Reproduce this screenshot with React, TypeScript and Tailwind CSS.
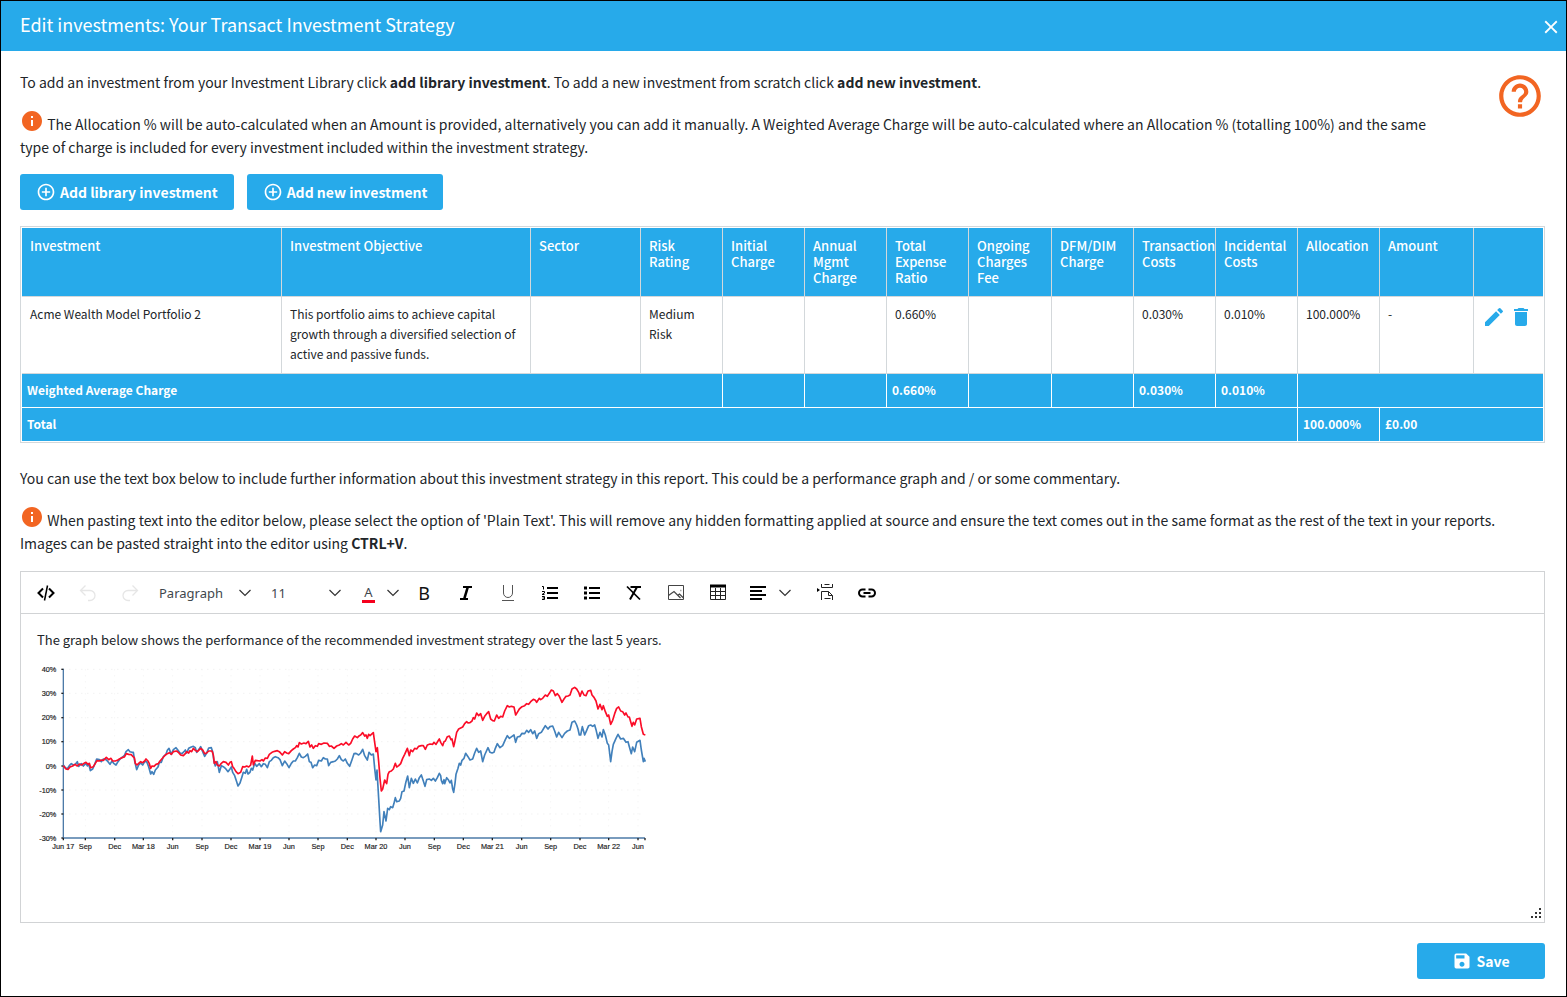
import React, { useState } from 'react';
import { MdAddCircleOutline, MdClose, MdDelete, MdEdit, MdHelpOutline, MdInfo, MdSave } from 'react-icons/md';

type Investment = {
    name: string;
    objective: string;
    sector: string;
    risk: string;
    charges: string[];
    allocation: string;
    amount: string;
};

type Segment = {
    start: number;
    points: string;
};

const columns = [
    { label: 'Investment', width: 'w-[260px]' },
    { label: 'Investment Objective', width: 'w-[249px]' },
    { label: 'Sector', width: 'w-[110px]' },
    { label: 'Risk Rating', width: 'w-[82px]' },
    { label: 'Initial Charge', width: 'w-[82px]' },
    { label: 'Annual Mgmt Charge', width: 'w-[82px]' },
    { label: 'Total Expense Ratio', width: 'w-[82px]' },
    { label: 'Ongoing Charges Fee', width: 'w-[83px]' },
    { label: 'DFM/DIM Charge', width: 'w-[82px]' },
    { label: 'Transaction Costs', width: 'w-[82px]' },
    { label: 'Incidental Costs', width: 'w-[82px]' },
    { label: 'Allocation', width: 'w-[82px]' },
    { label: 'Amount', width: 'w-[94px]' },
    { label: '', width: 'w-[69px]' },
];

const investments: Investment[] = [
    {
        name: 'Acme Wealth Model Portfolio 2',
        objective: 'This portfolio aims to achieve capital growth through a diversified selection of active and passive funds.',
        sector: '',
        risk: 'Medium Risk',
        charges: ['', '', '0.660%', '', '', '0.030%', '0.010%'],
        allocation: '100.000%',
        amount: '-',
    },
];

const averageCharges = ['', '', '0.660%', '', '', '0.030%', '0.010%'];

const yLabels = [
    { y: 43, label: '40%' },
    { y: 115, label: '30%' },
    { y: 188, label: '20%' },
    { y: 260, label: '10%' },
    { y: 333, label: '0%' },
    { y: 405, label: '-10%' },
    { y: 477, label: '-20%' },
    { y: 549, label: '-30%' },
];

const xLabels = [
    { x: 100, label: 'Jun 17' },
    { x: 166, label: 'Sep' },
    { x: 254, label: 'Dec' },
    { x: 340, label: 'Mar 18' },
    { x: 428, label: 'Jun' },
    { x: 516, label: 'Sep' },
    { x: 603, label: 'Dec' },
    { x: 690, label: 'Mar 19' },
    { x: 777, label: 'Jun' },
    { x: 864, label: 'Sep' },
    { x: 952, label: 'Dec' },
    { x: 1038, label: 'Mar 20' },
    { x: 1125, label: 'Jun' },
    { x: 1213, label: 'Sep' },
    { x: 1300, label: 'Dec' },
    { x: 1387, label: 'Mar 21' },
    { x: 1475, label: 'Jun' },
    { x: 1562, label: 'Sep' },
    { x: 1650, label: 'Dec' },
    { x: 1736, label: 'Mar 22' },
    { x: 1824, label: 'Jun' },
];

const portfolioSeries: Segment[] = [
    {
        start: 0,
        points: '100,332 108,342 114,343 120,336 128,333 135,328 142,333 148,327 155,330 162,325 168,322 174,328 178,325 182,338 190,335 196,325 201,317 208,318 214,315 220,316 229,307 236,314 243,310 248,318 256,318 262,316 268,312 276,308 283,306 289,296 296,298 304,299 308,304 313,308 316,325 321,330 326,325 332,320 338,323 344,318 348,312 354,318 358,326 362,340 366,333 372,334 378,328 385,326 390,318 398,309 406,300 412,296 418,293 424,298 430,290 440,288 446,293 452,300 460,302 466,296 470,290 476,294 480,287 485,290 490,280 496,286 502,290 508,284 512,280 518,285 524,296 530,294 536,288 546,288 550,300 553,325 558,320 562,330 568,333 574,325 580,320 588,322 595,330 600,322 604,320 608,335 612,340 618,350 624,356',
    },
    {
        start: 630,
        points: '2,352 8,335 14,336 20,333 26,336 32,330 37,303 40,330 46,316 60,318 66,314 70,318 76,309 82,310 88,298 96,292 104,289 112,287 118,290 127,300 134,290 140,294 146,296 154,287 160,282 166,278 170,272 174,276 178,263 184,267 192,264 198,266 205,259 210,276 215,270 220,280 226,272 232,274 236,266 244,268 252,264 262,265 268,274 274,273 282,280 290,273 298,270 304,266 310,270 318,262 326,270 332,265 338,252 344,243 352,248 358,242 362,240 368,233 374,243 378,240 382,250 386,238 390,242 400,233 404,262 408,290 412,278 416,320 420,370 424,408 428,402 434,375 440,386 444,358 448,350 454,348 460,342 466,325 470,336 476,332 482,326 488,310 494,298 502,280 508,302 512,285 518,290 524,280 530,282 536,274 544,272 550,272 556,283 562,270 570,267 578,268 582,262 588,268 594,258 598,252',
    },
    {
        start: 1230,
        points: '2,262 8,272 12,260 16,258 22,245 28,243 33,254 36,252 41,275 44,262 50,232 56,222 62,219 68,216 74,206 80,200 84,204 90,203 96,198 100,188 104,192 110,174 116,182 122,176 128,196 134,184 140,176 146,170 152,192 158,197 163,198 170,180 176,190 182,184 188,186 194,168 202,152 208,156 214,154 222,156 227,180 232,172 238,162 246,155 254,152 260,146 266,148 272,140 280,133 286,136 290,142 298,130 302,134 308,130 316,120 322,124 328,115 334,105 340,108 346,122 352,116 358,124 366,142 372,132 378,124 384,123 390,120 396,102 404,97 410,102 416,112 420,124 426,108 432,120 438,122 444,108 452,106 456,120 462,127 468,138 474,162 480,148 486,164 490,152 496,170 502,184 506,180 512,208 518,196 524,176 530,160 536,156 542,168 548,170 554,180 558,174 564,186 568,186 572,200 576,214 580,202 584,210 590,192 600,190 604,215 610,238 616,240',
    },
];

const benchmarkSeries: Segment[] = [
    {
        start: 0,
        points: '100,330 106,338 112,341 118,332 124,326 130,330 136,328 142,320 146,334 154,326 160,333 168,325 172,333 176,326 181,347 188,342 194,328 200,312 208,314 214,320 220,312 228,314 234,320 240,328 246,318 252,326 258,330 264,320 270,312 278,306 284,300 288,290 295,284 300,290 306,292 310,292 314,318 320,344 326,330 332,324 338,330 344,320 350,320 356,335 362,357 366,350 371,358 376,345 384,336 388,322 394,322 400,305 408,298 412,286 417,280 424,298 430,284 438,278 444,286 450,294 456,296 462,290 466,285 470,294 476,280 484,276 490,274 496,278 500,292 506,284 512,275 518,290 524,304 530,294 536,279 544,278 548,290 552,320 556,333 562,320 568,352 574,332 580,335 586,340 594,350 600,342 604,336 608,352 614,362 620,380 624,393',
    },
    {
        start: 630,
        points: '0,384 6,365 10,352 16,355 20,343 24,357 30,352 34,340 38,345 44,325 50,334 58,326 64,335 70,326 76,328 82,338 88,320 94,316 100,308 106,305 114,308 120,314 127,332 134,318 140,326 147,338 154,325 160,318 166,318 172,308 178,295 184,306 190,308 196,304 203,297 208,320 213,322 218,338 224,330 230,332 236,316 244,318 250,308 256,312 262,312 266,332 272,322 280,320 286,318 292,312 298,302 304,314 310,318 316,312 322,325 329,334 336,314 342,296 348,295 356,300 362,294 368,283 374,302 382,315 387,292 394,300 400,297 404,340 408,375 411,345 416,430 420,500 422,530 428,510 432,470 438,498 443,460 448,464 452,455 458,458 462,445 466,428 470,440 478,438 482,430 486,410 492,408 498,380 503,363 508,398 514,370 520,385 526,372 532,384 538,368 544,360 550,378 555,394 560,374 568,372 574,376 580,370 586,378 592,368 598,355',
    },
    {
        start: 1230,
        points: '2,362 4,376 8,386 12,374 14,386 20,368 26,376 30,384 34,376 38,402 41,412 45,385 48,358 54,340 58,325 62,330 66,316 72,310 77,295 84,305 90,315 98,312 104,294 110,280 116,292 122,288 128,320 134,300 144,278 150,292 156,294 162,292 166,280 172,266 180,278 188,272 196,254 202,242 208,250 216,244 222,240 227,262 232,246 240,244 246,235 254,236 260,226 266,232 272,224 278,236 284,228 290,250 296,236 304,232 310,222 316,212 324,222 330,215 338,213 344,228 350,246 356,232 366,248 374,235 382,228 390,225 396,202 404,198 410,210 414,222 418,240 422,240 427,215 434,240 440,226 446,212 452,210 458,214 464,210 468,224 474,250 480,232 486,246 490,224 496,240 502,265 506,270 512,320 516,290 520,268 528,250 534,238 542,252 550,250 558,262 564,260 568,275 574,296 578,276 584,290 590,262 600,256 604,285 610,320 612,310 616,320',
    },
];

const joinSegments = (segments: Segment[]) =>
    segments
        .flatMap(({ start, points }) =>
            points.split(' ').map((point) => {
                const [x, y] = point.split(',').map(Number);
                return `${x + start},${y}`;
            })
        )
        .join(' ');

const PerformanceChart = () => (
    <svg
        viewBox="0 0 1860 615"
        className="mt-1 block w-[620px] max-w-full"
        fontFamily="'Liberation Sans', Arial, sans-serif"
        fontSize="22"
        role="img"
        aria-label="Performance graph"
    >
        {yLabels.slice(0, 7).map(({ y }) => (
            <path key={y} d={`M100 ${y}H1845`} stroke="#ececec" strokeWidth="3" strokeDasharray="3 15" />
        ))}
        {xLabels.slice(1).map(({ x }) => (
            <path key={x} d={`M${x} 43V549`} stroke="#f1f1f1" strokeWidth="3" strokeDasharray="3 15" />
        ))}
        <path d="M100 41V549H1845" fill="none" stroke="#4d7ba8" strokeWidth="4" />
        {yLabels.map(({ y, label }) => (
            <g key={label}>
                <path d={`M94 ${y}h6`} stroke="#222" strokeWidth="4" />
                <text x="79" y={y + 8} textAnchor="end" fill="#222" stroke="#222" strokeWidth="0.5">{label}</text>
            </g>
        ))}
        {xLabels.map(({ x, label }) => (
            <g key={x}>
                <path d={`M${x} 549v7`} stroke="#222" strokeWidth="4" />
                <text x={x} y="583" textAnchor="middle" fill="#222" stroke="#222" strokeWidth="0.5">{label}</text>
            </g>
        ))}
        <path d="M1845 549v7" stroke="#222" strokeWidth="4" />
        <polyline points={joinSegments(benchmarkSeries)} fill="none" stroke="#4180bb" strokeWidth="5" strokeLinejoin="round" />
        <polyline points={joinSegments(portfolioSeries)} fill="none" stroke="#fb0d28" strokeWidth="5" strokeLinejoin="round" />
    </svg>
);

const Chevron = () => (
    <svg viewBox="0 0 12 12" className="pointer-events-none h-3 w-3 shrink-0" fill="none" stroke="#333" strokeWidth="1.2">
        <path d="M.5 3 6 8.500l5.500-5.500" />
    </svg>
);

const ToolButton = ({ label, disabled, children }: { label: string; disabled?: boolean; children: React.ReactNode }) => (
    <button type="button" aria-label={label} disabled={disabled} className="flex h-10 w-[42px] shrink-0 items-center justify-center">
        {children}
    </button>
);

const Toolbar = () => (
    <div role="toolbar" aria-label="Formatting" className="flex flex-wrap items-center border-b border-[#d1d3d5] pl-1 pt-px font-['Noto_Sans',sans-serif] text-[13px] text-[#3f474d]">
        <ToolButton label="Source code">
            <svg viewBox="0 0 18 18" className="h-[18px] w-[18px]" fill="none" stroke="#000" strokeWidth="2">
                <path d="M6 4.500 1.500 9 6 13.500M12 4.500 16.500 9 12 13.500" />
                <path d="M10.500 1.500 7.500 16.500" strokeWidth="1.500" />
            </svg>
        </ToolButton>
        <ToolButton label="Undo" disabled>
            <svg viewBox="0 0 18 18" className="h-[18px] w-[18px]" fill="none" stroke="#e6e6e6" strokeWidth="1.300">
                <path d="M6.500 1.500 1.500 6.500l5 5M1.500 6.500h9.500a5 5 0 0 1 0 10H9" />
            </svg>
        </ToolButton>
        <ToolButton label="Redo" disabled>
            <svg viewBox="0 0 18 18" className="h-[18px] w-[18px]" fill="none" stroke="#e6e6e6" strokeWidth="1.300">
                <path d="M11.500 1.500l5 5-5 5M16.500 6.500H7a5 5 0 0 0 0 10h2" />
            </svg>
        </ToolButton>
        <div className="grid w-[112px] items-center">
            <select aria-label="Block format" className="col-start-1 row-start-1 h-10 w-full appearance-none bg-transparent pl-2">
                <option>Paragraph</option>
                <option>Heading 1</option>
            </select>
            <div className="pointer-events-none col-start-1 row-start-1 mr-3 justify-self-end"><Chevron /></div>
        </div>
        <div className="grid w-[90px] items-center">
            <select aria-label="Font size" className="col-start-1 row-start-1 h-10 w-full appearance-none bg-transparent pl-2">
                <option>11</option>
                <option>12</option>
            </select>
            <div className="pointer-events-none col-start-1 row-start-1 mr-3 justify-self-end"><Chevron /></div>
        </div>
        <button type="button" aria-label="Text colour" className="flex h-10 w-[50px] items-center gap-3 pl-[9px]">
            <span className="flex w-[13px] flex-col items-center border-b-[3px] border-[#f5001d] leading-4">A</span>
            <Chevron />
        </button>
        <ToolButton label="Bold"><span className="text-lg text-[#111]">B</span></ToolButton>
        <ToolButton label="Italic">
            <svg viewBox="0 0 18 18" className="h-[18px] w-[18px]" fill="none" stroke="#000" strokeWidth="2">
                <path d="M6 3h9M3 15h8" />
                <path d="M10.800 3 7.200 15" strokeWidth="2.600" />
            </svg>
        </ToolButton>
        <ToolButton label="Underline">
            <svg viewBox="0 0 18 18" className="h-[18px] w-[18px]" fill="none" stroke="#555">
                <path d="M4.500 1v8a4.500 4.500 0 0 0 9 0V1M3 16.500h12" />
            </svg>
        </ToolButton>
        <ToolButton label="Numbered list">
            <svg viewBox="0 0 18 18" className="h-[18px] w-[18px]" fill="none" stroke="#000" strokeWidth="2">
                <path d="M6 4h11M6 9h11M6 14h11" />
                <path d="M1 2.500h1.500v3M1 7.500h2.500v1.500L1 10.500h2.500M1 12.500h2.500v3H1M1.500 14h2" strokeWidth="1" />
            </svg>
        </ToolButton>
        <ToolButton label="Bulleted list">
            <svg viewBox="0 0 18 18" className="h-[18px] w-[18px]" fill="none" stroke="#000" strokeWidth="2">
                <path d="M6 4h11M6 9h11M6 14h11" />
                <path d="M1 4h3M1 9h3M1 14h3" strokeWidth="2.800" />
            </svg>
        </ToolButton>
        <ToolButton label="Clear format">
            <svg viewBox="0 0 18 18" className="h-[18px] w-[18px]" fill="none" stroke="#000" strokeWidth="2">
                <path d="M5.500 3H16M12 3 5 15.500" />
                <path d="M2 2.500 15 15.500" strokeWidth="1.700" />
            </svg>
        </ToolButton>
        <ToolButton label="Insert image">
            <svg viewBox="0 0 18 18" className="h-[18px] w-[18px]" fill="none" stroke="#444">
                <path d="M1.500 1.500h15v14h-15z" />
                <path d="M1.500 11.500 7 7.500l6.500 6.500M10.500 11.500l2-1.500 4 4" strokeWidth="1.200" />
                <path d="M13 6.500h1.500" strokeWidth="1.500" stroke="#aaa" />
            </svg>
        </ToolButton>
        <ToolButton label="Insert table">
            <svg viewBox="0 0 18 18" className="h-[18px] w-[18px]" fill="none" stroke="#222">
                <path d="M1.500 1.500h15v14h-15zM1.500 7.500h15M1.500 11.500h15M6.500 4v11.500M11.500 4v11.500" />
                <path d="M1 2h16" stroke="#000" strokeWidth="3" />
            </svg>
        </ToolButton>
        <button type="button" aria-label="Alignment" className="flex h-10 w-[65px] items-center gap-3 pl-[10px]">
            <svg viewBox="0 0 18 18" className="h-[18px] w-[18px]" fill="none" stroke="#000" strokeWidth="2">
                <path d="M1 3h16M1 7h12M1 11h16M1 15h12" />
            </svg>
            <Chevron />
        </button>
        <ToolButton label="Page break">
            <svg viewBox="0 0 18 18" className="h-[18px] w-[18px]" fill="none" stroke="#222">
                <path d="M5.500 0v3.500h11V0M8.500.5h5M5.500 16V7.500h7l4 4V16M12.500 7.500v4h4M8.500 7.500h2M8.500 14.500h6" />
                <path d="M1 4v4l3-2z" fill="#000" stroke="none" />
            </svg>
        </ToolButton>
        <ToolButton label="Insert link">
            <svg viewBox="0 0 18 18" className="h-[18px] w-[18px]" fill="none" stroke="#000" strokeWidth="2">
                <path d="M7.500 12.500H4.500a3.500 3.500 0 0 1 0-7h3M10.500 5.500h3a3.500 3.500 0 0 1 0 7h-3M5.500 9h7" />
            </svg>
        </ToolButton>
    </div>
);

const InfoIcon = () => <MdInfo className="-mt-[10px] inline h-6 w-6 align-middle text-[#f26522]" />;

const buttonStyle = 'flex h-9 items-center justify-center gap-1 rounded-[3px] bg-[#27aaea] font-bold text-white';
const bodyCell = 'border-b border-r border-[#d3d8db] px-2 pt-[7px] pb-[9px] last:border-r-0';
const footerCell = 'border-r border-white px-[5px] pb-[2px] last:border-r-0';

const App = () => {
    const [rows, setRows] = useState(investments);

    const handleDelete = (name: string) => {
        setRows(rows.filter((row) => row.name !== name));
    };

    return (
        <div className="min-h-screen border border-black bg-white font-['Noto_Sans_CJK_SC',sans-serif] text-sm leading-[23px] text-[#212529]">
            <header className="flex h-[50px] items-center justify-between bg-[#27aaea] pl-[19px] pr-1 text-white">
                <h1 className="pb-1 text-lg">Edit investments: Your Transact Investment Strategy</h1>
                <button type="button" aria-label="Close" className="pt-[2px]"><MdClose className="h-[22px] w-[22px]" /></button>
            </header>

            <main className="pl-[19px] pr-[21px] pt-5">
                <div className="flex items-start justify-between gap-12">
                    <div>
                        <p className="mb-[19px]">
                            To add an investment from your Investment Library click <b>add library investment</b>. To add a new investment from scratch click <b>add new investment</b>.
                        </p>
                        <p>
                            <InfoIcon /> The Allocation % will be auto-calculated when an Amount is provided, alternatively you can add it manually. A Weighted Average Charge will be auto-calculated where an Allocation % (totalling 100%) and the same type of charge is included for every investment included within the investment strategy.
                        </p>
                    </div>
                    <button type="button" aria-label="Help" className="shrink-0 text-[#f26522]">
                        <MdHelpOutline className="h-[50px] w-[50px]" />
                    </button>
                </div>

                <div className="mt-[15px] flex gap-[13px]">
                    <button type="button" className={`${buttonStyle} px-4`}>
                        <MdAddCircleOutline className="h-5 w-5" />
                        Add library investment
                    </button>
                    <button type="button" className={`${buttonStyle} px-4`}>
                        <MdAddCircleOutline className="h-5 w-5" />
                        Add new investment
                    </button>
                </div>

                <div className="mt-4 border border-[#d3d8db] p-px">
                    <table className="w-full table-fixed border-separate border-spacing-0 text-left align-top text-xs">
                        <thead>
                            <tr className="h-[69px] bg-[#27aaea] text-[13px] leading-4 text-white">
                                {columns.map(({ label, width }) => (
                                    <th key={label} aria-label={label || 'Actions'} className={`${width} border-b border-r border-[#d3d8db] px-2 pt-[10px] align-top font-medium last:border-r-0`}>
                                        {label}
                                    </th>
                                ))}
                            </tr>
                        </thead>
                        <tbody>
                            {rows.map((row) => (
                                <tr key={row.name} className="align-top leading-5">
                                    <td className={bodyCell}>{row.name}</td>
                                    <td className={bodyCell}>{row.objective}</td>
                                    <td className={bodyCell}>{row.sector}</td>
                                    <td className={bodyCell}>{row.risk}</td>
                                    {row.charges.map((charge, index) => (
                                        <td key={index} className={bodyCell}>{charge}</td>
                                    ))}
                                    <td className={bodyCell}>{row.allocation}</td>
                                    <td className={bodyCell}>{row.amount}</td>
                                    <td className={bodyCell}>
                                        <div className="flex gap-[3px] pt-px text-[#27aaea]">
                                            <button type="button" aria-label="Edit"><MdEdit className="h-6 w-6" /></button>
                                            <button type="button" aria-label="Delete" onClick={() => handleDelete(row.name)}><MdDelete className="h-6 w-6" /></button>
                                        </div>
                                    </td>
                                </tr>
                            ))}
                        </tbody>
                        <tfoot className="bg-[#27aaea] font-bold text-white">
                            <tr className="h-[34px]">
                                <td colSpan={4} className={`${footerCell} border-b`}>Weighted Average Charge</td>
                                {averageCharges.map((charge, index) => (
                                    <td key={index} className={`${footerCell} border-b`}>{charge}</td>
                                ))}
                                <td colSpan={3} className={`${footerCell} border-b`} />
                            </tr>
                            <tr className="h-[33px]">
                                <td colSpan={11} className={footerCell}>Total</td>
                                <td className={footerCell}>100.000%</td>
                                <td colSpan={2} className={footerCell}>£0.00</td>
                            </tr>
                        </tfoot>
                    </table>
                </div>

                <p className="mt-6 mb-[19px]">
                    You can use the text box below to include further information about this investment strategy in this report. This could be a performance graph and / or some commentary.
                </p>
                <p>
                    <InfoIcon /> When pasting text into the editor below, please select the option of 'Plain Text'. This will remove any hidden formatting applied at source and ensure the text comes out in the same format as the rest of the text in your reports. Images can be pasted straight into the editor using <b>CTRL+V</b>.
                </p>

                <div className="relative mt-4 border border-[#d1d3d5]">
                    <Toolbar />
                    <div
                        role="textbox"
                        aria-multiline="true"
                        aria-label="Further information"
                        contentEditable
                        suppressContentEditableWarning
                        className="min-h-[308px] px-[9px] pt-[14px] text-[13px] outline-none"
                    >
                        <p className="px-[7px]">The graph below shows the performance of the recommended investment strategy over the last 5 years.</p>
                        <PerformanceChart />
                    </div>
                    <svg viewBox="0 0 12 12" className="absolute right-[2px] bottom-[2px] h-3 w-3" fill="#333">
                        <path d="M9 0h2v2H9zM5 4h2v2H5zM9 4h2v2H9zM1 8h2v2H1zM5 8h2v2H5zM9 8h2v2H9z" />
                    </svg>
                </div>

                <div className="mt-5 flex justify-end pb-4">
                    <button type="button" className={`${buttonStyle} w-32`}>
                        <MdSave className="h-5 w-5" />
                        Save
                    </button>
                </div>
            </main>
        </div>
    );
};

export default App;
